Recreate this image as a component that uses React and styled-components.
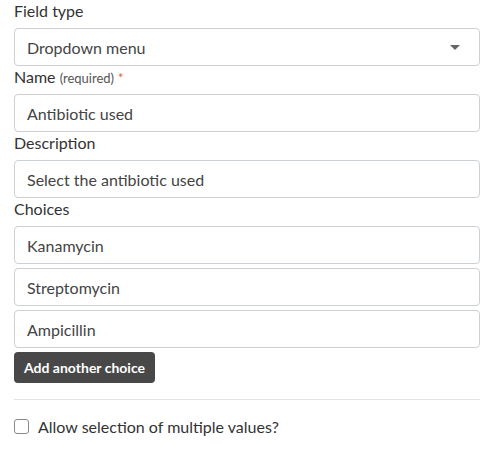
import React, { useState } from 'react';
import styled, { createGlobalStyle } from 'styled-components';

const GlobalStyle = createGlobalStyle`
    html, body {
        margin: 0;
        background: #fff;
    }
    body {
        font-family: Lato, "Open Sans", sans-serif;
        color: #333;
    }
`

const Form = styled.div`
    width: 466px;
    padding: 0 6px 0 14px;
    display: flex;
    flex-direction: column;
`

const Label = styled.label`
    display: block;
    height: 22px;
    font-size: 16px;
    line-height: 22px;
    margin-bottom: 6px;
    color: #333;
`

const Hint = styled.span`
    font-size: 13px;
    line-height: 1;
    color: #555;
`

const Required = styled.span`
    font-size: 13px;
    line-height: 1;
    color: #e8603c;
    margin-left: 4px;
`

const Field = styled.div`
    box-sizing: border-box;
    height: 38px;
    border: 1px solid #ccd1d6;
    border-radius: 4px;
    padding: 0 12px;
    display: flex;
    align-items: center;
    justify-content: space-between;
    font-size: 16px;
    color: #444;
`

const Caret = styled.span`
    width: 0;
    height: 0;
    margin-right: 7px;
    border-left: 5px solid transparent;
    border-right: 5px solid transparent;
    border-top: 5px solid #666;
`

const Choices = styled.div`
    display: flex;
    flex-direction: column;
    gap: 4px;
`

const Button = styled.button`
    align-self: flex-start;
    margin-top: 4px;
    height: 31px;
    padding: 0 10px;
    border: none;
    border-radius: 4px;
    background: #484848;
    color: #fff;
    font-family: Lato, sans-serif;
    font-weight: 700;
    font-size: 14px;
`

const Divider = styled.hr`
    border: none;
    border-top: 1px solid #e3e3e3;
    margin: 16px 0 0;
    width: 100%;
`

const CheckRow = styled.label`
    display: flex;
    align-items: center;
    gap: 9px;
    margin-top: 17px;
    font-size: 16px;
    color: #333;
`

const Box = styled.span`
    box-sizing: border-box;
    width: 15px;
    height: 15px;
    border: 1px solid #8a8a8a;
    border-radius: 3px;
    background: ${(p) => (p.$checked ? '#484848' : '#fff')};
`

const App = () => {
    const [multi, setMulti] = useState(false);
    const choices = ['Kanamycin', 'Streptomycin', 'Ampicillin'];

    return (
        <>
            <GlobalStyle />
            <Form>
                <Label>Field type</Label>
                <Field>
                    Dropdown menu
                    <Caret />
                </Field>
                <Label>
                    Name <Hint>(required)</Hint><Required>*</Required>
                </Label>
                <Field>Antibiotic used</Field>
                <Label>Description</Label>
                <Field>Select the antibiotic used</Field>
                <Label>Choices</Label>
                <Choices>
                    {choices.map((c) => (
                        <Field key={c}>{c}</Field>
                    ))}
                </Choices>
                <Button>Add another choice</Button>
                <Divider />
                <CheckRow onClick={() => setMulti(!multi)}>
                    <Box $checked={multi} />
                    Allow selection of multiple values?
                </CheckRow>
            </Form>
        </>
    );
};

export default App;
